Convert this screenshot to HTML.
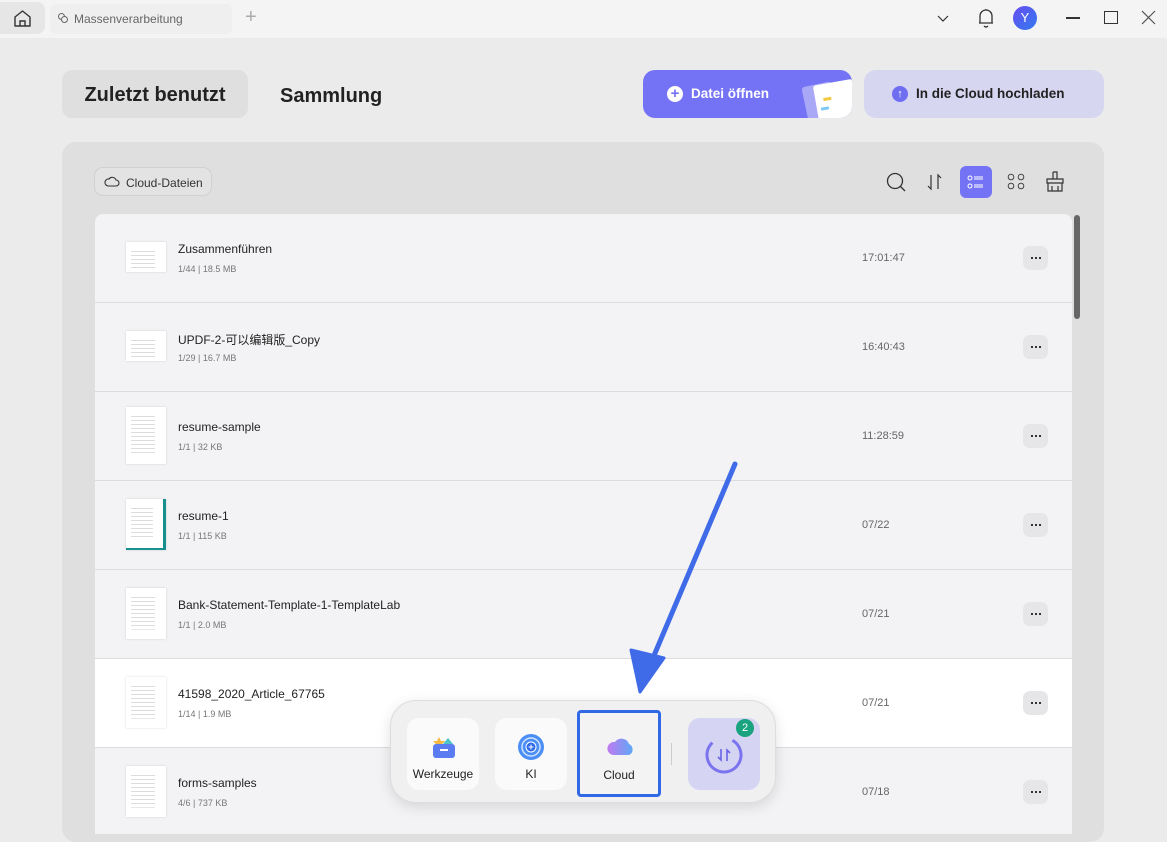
<!DOCTYPE html>
<html><head><meta charset="utf-8"><style>
*{box-sizing:border-box;margin:0;padding:0}
body{width:1167px;height:828px;overflow:hidden;background:#ebebeb;font-family:"Liberation Sans","Noto Sans CJK SC",sans-serif;position:relative;color:#222}
.top{position:absolute;left:0;top:0;width:1167px;height:38px;background:#f4f4f4}
.abs{position:absolute}
.panel{position:absolute;left:62px;top:142px;width:1042px;height:700px;background:#dfdfdf;border-radius:14px}
.list{position:absolute;left:95px;top:214px;width:977px;height:620px;background:#f3f3f5;border-radius:8px 8px 0 0;overflow:hidden}
.row{position:absolute;left:0;width:977px;height:89px;border-bottom:1.5px solid #dcdcdc}
.thumb{position:absolute;left:31px;width:40px;background:#fff;box-shadow:0 0 2px rgba(0,0,0,.15);background-image:repeating-linear-gradient(#fff 0 3px,#ddd 3px 4px);background-size:60% 70%;background-repeat:no-repeat;background-position:5px 6px}
.name{position:absolute;left:83px;font-size:12px;color:#222}
.meta{position:absolute;left:83px;font-size:9px;color:#777}
.time{position:absolute;left:767px;font-size:11px;color:#666}
.dots{position:absolute;left:928px;width:25px;height:24px;border-radius:7px;background:#e6e6e8}
.dots::after{content:"";position:absolute;left:8px;top:11px;width:2px;height:2px;background:#333;box-shadow:4px 0 #333,8px 0 #333}
.dock{position:absolute;left:390px;top:700px;width:386px;height:103px;border-radius:26px;background:#f0f0f0;border:1px solid #ddd;box-shadow:0 4px 14px rgba(0,0,0,.12)}
.db{position:absolute;top:17px;width:72px;height:72px;border-radius:12px;background:#fafafa;font-size:12px;text-align:center}
.db span{position:absolute;bottom:9px;left:0;right:0;color:#222}
</style></head><body>
<div class="top"></div>
<div class="abs" style="left:0;top:2px;width:45px;height:32px;background:#e6e6e6;border-radius:0 8px 8px 0"></div>
<svg class="abs" style="left:13px;top:9px" width="19" height="19" viewBox="0 0 19 19"><path d="M2 8 L9.5 2 L17 8 V17 H2 Z" fill="none" stroke="#333" stroke-width="1.4" stroke-linejoin="round"/><path d="M7 17 V12 H12 V17" fill="none" stroke="#333" stroke-width="1.4"/></svg>
<div class="abs" style="left:50px;top:4px;width:182px;height:30px;background:#efefef;border-radius:6px"></div>
<svg class="abs" style="left:57px;top:12px" width="12" height="12"><circle cx="4.5" cy="4.5" r="3" fill="none" stroke="#666"/><circle cx="7.5" cy="7.5" r="3" fill="#efefef" stroke="#666"/></svg>
<div class="abs" style="left:74px;top:12px;font-size:12px;color:#666">Massenverarbeitung</div>
<div class="abs" style="left:245px;top:6px;font-size:20px;color:#aaa;font-weight:200">+</div>
<svg class="abs" style="left:936px;top:13px" width="14" height="10"><path d="M2 3 L7 8 L12 3" fill="none" stroke="#333" stroke-width="1.2"/></svg>
<svg class="abs" style="left:976px;top:7px" width="20" height="22"><path d="M4 16 V9 A6 6 0 0 1 16 9 V16 Z M3 16 H17 M8 19 Q10 21 12 19" fill="none" stroke="#333" stroke-width="1.3"/><path d="M10 2 V3" stroke="#333"/></svg>
<div class="abs" style="left:1013px;top:6px;width:24px;height:24px;border-radius:12px;background:linear-gradient(135deg,#6a4cf0,#2f7cf0);color:#fff;font-size:13px;text-align:center;line-height:24px">Y</div>
<div class="abs" style="left:1066px;top:17px;width:14px;height:1.5px;background:#333"></div>
<div class="abs" style="left:1104px;top:11px;width:14px;height:13px;border:1.5px solid #333"></div>
<svg class="abs" style="left:1141px;top:10px" width="15" height="15"><path d="M1 1 L14 14 M14 1 L1 14" stroke="#555" stroke-width="1.2"/></svg>

<div class="abs" style="left:62px;top:70px;width:186px;height:48px;background:#dfdfdf;border-radius:10px;font-size:20px;font-weight:bold;line-height:50px;text-align:center;color:#222">Zuletzt benutzt</div>
<div class="abs" style="left:280px;top:85px;font-size:20px;font-weight:bold;color:#222">Sammlung</div>

<div class="abs" style="left:643px;top:70px;width:209px;height:48px;background:#7573f5;border-radius:12px;overflow:hidden">
 <div class="abs" style="left:162px;top:14px;width:30px;height:38px;background:#a9a8f7;transform:rotate(-12deg);border-radius:3px"></div>
 <div class="abs" style="left:173px;top:12px;width:40px;height:40px;background:#fff;transform:rotate(-10deg);border-radius:3px"><div style="margin:14px 0 0 8px;width:8px;height:3px;background:#f5c842"></div><div style="margin:6px 0 0 4px;width:8px;height:3px;background:#7ec8f5"></div></div>
</div>
<div class="abs" style="left:667px;top:86px;width:16px;height:16px;border-radius:8px;background:#fff;color:#7573f5;font-size:15px;font-weight:bold;text-align:center;line-height:16px">+</div>
<div class="abs" style="left:691px;top:86px;font-size:13.5px;font-weight:bold;color:#fff">Datei öffnen</div>
<div class="abs" style="left:864px;top:70px;width:240px;height:48px;background:#d7d6f1;border-radius:12px"></div>
<div class="abs" style="left:892px;top:86px;width:16px;height:16px;border-radius:8px;background:#6f6ef0;color:#fff;font-size:11px;font-weight:bold;text-align:center;line-height:16px">↑</div>
<div class="abs" style="left:916px;top:86px;font-size:13.5px;font-weight:bold;color:#222">In die Cloud hochladen</div>

<div class="panel"></div>
<div class="abs" style="left:94px;top:167px;width:118px;height:29px;border:1px solid #d0d0d0;border-radius:9px;background:#e3e3e3"></div>
<svg class="abs" style="left:104px;top:175px" width="16" height="13"><path d="M4 11 H12 A3 3 0 0 0 12 5 A4 4 0 0 0 5 4 A3.5 3.5 0 0 0 4 11 Z" fill="none" stroke="#333" stroke-width="1.1"/></svg>
<div class="abs" style="left:126px;top:176px;font-size:12px;color:#333">Cloud-Dateien</div>
<svg class="abs" style="left:885px;top:171px" width="24" height="22"><circle cx="10" cy="10" r="7.5" fill="none" stroke="#333" stroke-width="1.3"/><path d="M15.5 15.5 L20 20" stroke="#333" stroke-width="1.3"/></svg>
<svg class="abs" style="left:925px;top:172px" width="20" height="20"><path d="M6 3 V17 L3 14 M13 17 V3 L16 6" fill="none" stroke="#333" stroke-width="1.2"/></svg>
<div class="abs" style="left:960px;top:166px;width:32px;height:32px;background:#7573f5;border-radius:6px"></div>
<svg class="abs" style="left:966px;top:173px" width="20" height="18"><circle cx="4" cy="5" r="2" fill="none" stroke="#fff"/><circle cx="4" cy="13" r="2" fill="none" stroke="#fff"/><path d="M8 4H17M8 6H17M8 12H17M8 14H17" stroke="#fff" stroke-width="1"/></svg>
<svg class="abs" style="left:1005px;top:172px" width="22" height="20"><circle cx="6" cy="5" r="2.8" fill="none" stroke="#444"/><circle cx="16" cy="5" r="2.8" fill="none" stroke="#444"/><circle cx="6" cy="14" r="2.8" fill="none" stroke="#444"/><circle cx="16" cy="14" r="2.8" fill="none" stroke="#444"/></svg>
<svg class="abs" style="left:1044px;top:170px" width="22" height="24"><path d="M9 2 H13 V9 M9 2 V9 M3 9 H19 V13 H3 Z M4 13 V21 H18 V13 M8 21 V16 M14 21 V16" fill="none" stroke="#333" stroke-width="1.2"/></svg>

<div class="list">
 <div class="row" style="top:0"><div class="thumb" style="top:28px;height:30px"></div><div class="name" style="top:28px">Zusammenführen</div><div class="meta" style="top:50px">1/44 | 18.5 MB</div><div class="time" style="top:38px">17:01:47</div><div class="dots" style="top:32px"></div></div>
 <div class="row" style="top:89px"><div class="thumb" style="top:28px;height:30px"></div><div class="name" style="top:28px">UPDF-2-可以编辑版_Copy</div><div class="meta" style="top:50px">1/29 | 16.7 MB</div><div class="time" style="top:38px">16:40:43</div><div class="dots" style="top:32px"></div></div>
 <div class="row" style="top:178px"><div class="thumb" style="top:15px;height:57px"></div><div class="name" style="top:28px">resume-sample</div><div class="meta" style="top:50px">1/1 | 32 KB</div><div class="time" style="top:38px">11:28:59</div><div class="dots" style="top:32px"></div></div>
 <div class="row" style="top:267px"><div class="thumb" style="top:18px;height:51px;border-right:3px solid #17908e;border-bottom:2px solid #17908e"></div><div class="name" style="top:28px">resume-1</div><div class="meta" style="top:50px">1/1 | 115 KB</div><div class="time" style="top:38px">07/22</div><div class="dots" style="top:32px"></div></div>
 <div class="row" style="top:356px"><div class="thumb" style="top:18px;height:51px"></div><div class="name" style="top:28px">Bank-Statement-Template-1-TemplateLab</div><div class="meta" style="top:50px">1/1 | 2.0 MB</div><div class="time" style="top:38px">07/21</div><div class="dots" style="top:32px"></div></div>
 <div class="row" style="top:445px;background:#fff"><div class="thumb" style="top:18px;height:51px"></div><div class="name" style="top:28px">41598_2020_Article_67765</div><div class="meta" style="top:50px">1/14 | 1.9 MB</div><div class="time" style="top:38px">07/21</div><div class="dots" style="top:32px"></div></div>
 <div class="row" style="top:534px"><div class="thumb" style="top:18px;height:51px"></div><div class="name" style="top:28px">forms-samples</div><div class="meta" style="top:50px">4/6 | 737 KB</div><div class="time" style="top:38px">07/18</div><div class="dots" style="top:32px"></div></div>
</div>
<div class="abs" style="left:1074px;top:215px;width:6px;height:104px;background:#666;border-radius:3px"></div>

<svg class="abs" style="left:0;top:0;pointer-events:none" width="1167" height="828"><path d="M735 464 L650 665" stroke="#3f6ae8" stroke-width="5" stroke-linecap="round"/><path d="M631 650 L640 692 L664 658 Z" fill="#3f6ae8" stroke="#3f6ae8" stroke-width="3" stroke-linejoin="round"/></svg>

<div class="dock">
 <div class="db" style="left:16px"><svg style="position:absolute;left:24px;top:16px" width="26" height="26"><rect x="2" y="10" width="22" height="14" rx="3" fill="#5b7cf0"/><rect x="9" y="15" width="8" height="2" fill="#fff"/><polygon points="8,3 10,7 14,7 11,10 5,10 2,7 6,7" fill="#f5b942"/><polygon points="17,4 22,10 12,10" fill="#4cc3c8"/></svg><span>Werkzeuge</span></div>
 <div class="db" style="left:104px"><svg style="position:absolute;left:22px;top:15px" width="28" height="28"><circle cx="14" cy="14" r="13" fill="#4b8ef5"/><circle cx="14" cy="14" r="9" fill="none" stroke="#cfe3ff" stroke-width="1.5"/><circle cx="14" cy="14" r="5" fill="#2e6ae6" stroke="#fff"/><path d="M14 11.5V16.5M11.5 14H16.5" stroke="#fff"/></svg><span>KI</span></div>
 <div class="db" style="left:186px;top:9px;width:84px;height:87px;border:3px solid #3168e6;border-radius:4px;background:#f3f3f3"><svg style="position:absolute;left:26px;top:22px" width="30" height="22"><defs><linearGradient id="g" x1="0" x2="1"><stop offset="0" stop-color="#c07af0"/><stop offset="1" stop-color="#5ea7f5"/></linearGradient></defs><path d="M7 20 H23 A6 6 0 0 0 23 9 A8 8 0 0 0 9 7 A6.5 6.5 0 0 0 7 20 Z" fill="url(#g)"/></svg><span style="bottom:12px">Cloud</span></div>
 <div class="abs" style="left:280px;top:42px;width:1px;height:22px;background:#ccc"></div>
 <div class="db" style="left:297px;width:72px;background:#d6d4f3"><svg style="position:absolute;left:14px;top:15px" width="44" height="44"><circle cx="22" cy="22" r="17" fill="none" stroke="#7a74ee" stroke-width="3" stroke-dasharray="85 22" transform="rotate(-60 22 22)"/><path d="M19 16 V27 L16 24 M25 28 V17 L28 20" fill="none" stroke="#6a64e6" stroke-width="1.6"/></svg></div>
 <div class="abs" style="left:345px;top:18px;width:18px;height:18px;border-radius:9px;background:#1aa37f;color:#fff;font-size:11px;text-align:center;line-height:18px">2</div>
</div>
</body></html>
